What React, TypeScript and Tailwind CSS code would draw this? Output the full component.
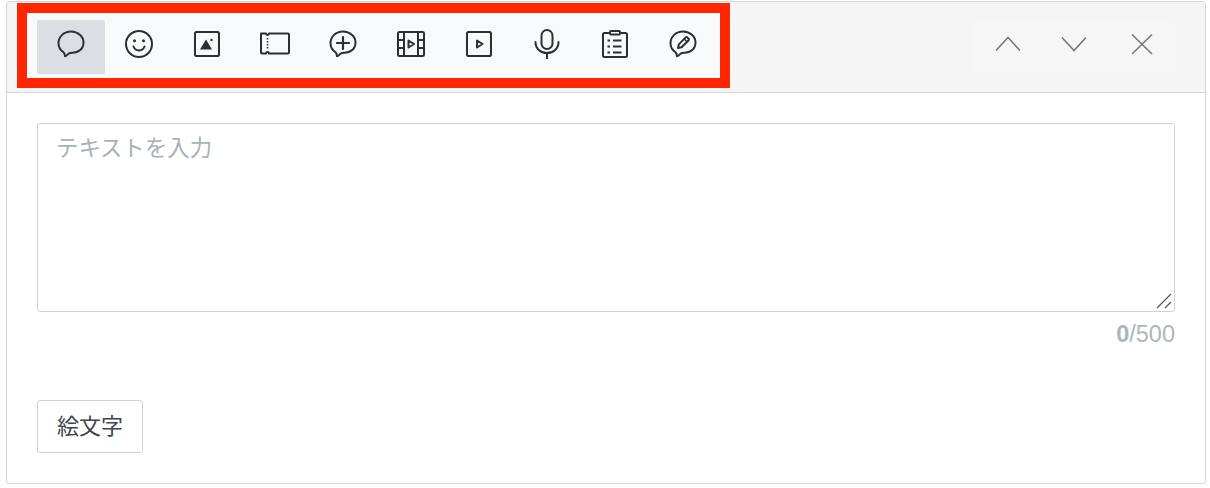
import React from 'react';

const Bubble = ({ children }: { children?: React.ReactNode }) => (
  <svg width="28" height="28" viewBox="0 0 28 28" fill="none" stroke="#2b3036" strokeWidth="2" strokeLinejoin="round">
    <path d="M8 26.200C7.900 25 7.600 23.300 6.500 22.300 3.300 20 1.500 16.800 1.500 13.200 1.500 6.600 7 1.500 14 1.500s12.500 5 12.500 11c0 6.500-5 10.300-11 10.300-1.800 0-3 0-4 .9-1 1.100-2.200 2.500-3.500 2.500z" />
    {children}
  </svg>
);

const toolbarIcons = [
  <Bubble key="text" />,
  <svg key="emoji" width="28" height="28" viewBox="0 0 28 28" fill="none" stroke="#2b3036" strokeWidth="2" strokeLinecap="round">
    <circle cx="14" cy="14" r="13" />
    <path d="M8.500 16.500c1 2.600 3.100 3.900 5.500 3.900s4.500-1.300 5.500-3.900" />
    <circle cx="9.500" cy="10.800" r="1.500" fill="#2b3036" stroke="none" />
    <circle cx="18.500" cy="10.800" r="1.500" fill="#2b3036" stroke="none" />
  </svg>,
  <svg key="image" width="28" height="28" viewBox="0 0 28 28" fill="none" stroke="#2b3036" strokeWidth="2">
    <rect x="2" y="2" width="24" height="24" rx="1.500" />
    <path d="M7 19.500 13 9.500 19 19.500z" fill="#2b3036" stroke="none" />
    <circle cx="18.500" cy="10" r="1.200" fill="#2b3036" stroke="none" />
  </svg>,
  <svg key="coupon" width="30" height="24" viewBox="0 0 30 24" fill="none" stroke="#2b3036" strokeWidth="2" strokeLinejoin="round">
    <path d="M1 1.500h5c.2 1 .7 1.500 1.500 1.500S8.800 2.500 9 1.500h19c.6 0 1 .4 1 1v18c0 .6-.4 1-1 1H9c-.2-1-.7-1.500-1.500-1.500s-1.300.5-1.500 1.500H2c-.6 0-1-.4-1-1z" />
    <path d="M7.500 6v11.500" strokeWidth="1.600" strokeDasharray="1.500 1.500" />
  </svg>,
  <Bubble key="plus">
    <path d="M14 7v12M8 13h12" strokeLinecap="round" strokeWidth="2.200" />
  </Bubble>,
  <svg key="video" width="28" height="28" viewBox="0 0 28 28" fill="none" stroke="#2b3036" strokeWidth="2" strokeLinejoin="round">
    <rect x="1" y="2" width="26" height="24" rx="1.500" />
    <path d="M7 2v24M21 2v24M1 10h6M1 18h6M21 10h6M21 18h6" />
    <path d="M11.500 10.500l5.500 3.500-5.500 3.500z" />
  </svg>,
  <svg key="richvideo" width="28" height="28" viewBox="0 0 28 28" fill="none" stroke="#2b3036" strokeWidth="2" strokeLinejoin="round">
    <rect x="2" y="2" width="24" height="24" rx="1.500" />
    <path d="M12 10.500l5.500 3.500-5.500 3.500z" />
  </svg>,
  <svg key="mic" width="28" height="30" viewBox="0 0 28 30" fill="none" stroke="#2b3036" strokeWidth="2" strokeLinecap="round">
    <rect x="8.500" y="1" width="11" height="19" rx="5.500" />
    <path d="M2.500 13c0 6.500 5 11 11.500 11s11.500-4.500 11.500-11M14 24v5.500" />
  </svg>,
  <svg key="survey" width="26" height="28" viewBox="0 0 26 28" fill="none" stroke="#2b3036" strokeWidth="2" strokeLinejoin="round">
    <path d="M8 3H2.500C1.700 3 1 3.700 1 4.500v21c0 .8.700 1.500 1.500 1.500h21c.8 0 1.500-.7 1.500-1.500v-21c0-.8-.7-1.500-1.500-1.500H18" />
    <rect x="8" y="1" width="10" height="3.500" rx="1" />
    <path d="M11 10.500h8.500M11 16.500h8.500M11 22.500h8.500M5.500 10.500h2.500M5.500 16.500h2.500M5.500 22.500h2.500" />
  </svg>,
  <Bubble key="edit">
    <path d="M9 18l.8-3.600 6.700-6.800c.6-.6 1.400-.6 2 0l.9.900c.6.6.6 1.400 0 2l-6.800 6.700z" />
    <path d="M15.200 9l3.100 3.100" strokeWidth="1.400" />
  </Bubble>,
];

const navIcons = ['M4 21.500 16 8.500l12 13', 'M3 8.500 15 21.500 27 8.500', 'M6 5.500l20 19.500M26 5.500 6 25'];

const App: React.FC = () => {
  return (
    <div className="w-[1210px] h-[488px] bg-white pt-px pl-1.5 pr-1 pb-1 font-['Liberation_Sans','Noto_Sans_CJK_JP',sans-serif]">
      <div className="h-[483px] border border-[#d4d6d9] rounded-[3px] overflow-hidden">
        {/* Header */}
        <div className="h-[91px] bg-[#f5f5f5] border-b border-[#d4d6d9] flex justify-between pl-2.5 pr-[31px]">
          <div className="mt-px h-[85px] w-[713px] border-[10px] border-[#ff2600] bg-[#f8f9fb] pl-2.5 pt-[7px]">
            <div className="flex">
              {toolbarIcons.map((icon, i) => (
                <button
                  key={i}
                  className={`w-[68px] h-[54px] pb-1.5 flex items-center justify-center rounded-[2px] ${i === 0 ? 'bg-[#dbdfe4]' : ''}`}
                >
                  {icon}
                </button>
              ))}
            </div>
          </div>
          <div className="mt-[18px] h-[53px] flex bg-[#f6f6f6]">
            {navIcons.map((d, i) => (
              <button key={i} className="w-[67px] pb-1.5 flex items-center justify-center">
                <svg width="30" height="30" viewBox="0 0 30 30" fill="none" stroke="#75787c" strokeWidth="1.600">
                  <path d={d} />
                </svg>
              </button>
            ))}
          </div>
        </div>

        {/* Body */}
        <div className="pt-[30px] pl-[30px] pr-[30px]">
          <div className="relative h-[189px] w-[1138px] border border-[#cfd3d8] rounded-[3px] pl-[18px] pt-2.5 text-[22.400px] leading-[30px] text-[#a8b0b9]">
            テキストを入力
            <svg className="absolute right-0.5 bottom-0.5" width="16" height="16" viewBox="0 0 16 16" stroke="#55585c" strokeWidth="1.300">
              <path d="M1 15 15 1M9 15l6-6" />
            </svg>
          </div>
          <div className="w-[1138px] mt-[7px] text-right text-[23.500px] leading-[30px] text-[#aeb5bd]">
            <span className="font-bold">0</span>/500
          </div>
          <button className="block mt-[51px] w-[106px] h-[53px] border border-[#cfd3d8] rounded-[3px] text-[22px] text-[#3f454b] bg-white">
            絵文字
          </button>
        </div>
      </div>
    </div>
  );
};

export default App;
